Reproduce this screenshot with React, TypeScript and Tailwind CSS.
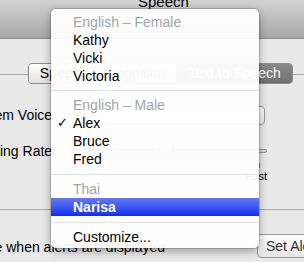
import React from 'react';

type Row =
  | { kind: 'header'; label: string }
  | { kind: 'item'; label: string; checked?: boolean; active?: boolean }
  | { kind: 'sep'; h: string };

const rows: Row[] = [
  { kind: 'header', label: 'English – Female' },
  { kind: 'item', label: 'Kathy' },
  { kind: 'item', label: 'Vicki' },
  { kind: 'item', label: 'Victoria' },
  { kind: 'sep', h: 'h-[11px]' },
  { kind: 'header', label: 'English – Male' },
  { kind: 'item', label: 'Alex', checked: true },
  { kind: 'item', label: 'Bruce' },
  { kind: 'item', label: 'Fred' },
  { kind: 'sep', h: 'h-[12px]' },
  { kind: 'header', label: 'Thai' },
  { kind: 'item', label: 'Narisa', active: true },
  { kind: 'sep', h: 'h-[12px]' },
  { kind: 'item', label: 'Customize...' },
];

const VoiceMenu: React.FC = () => (
  <div className="absolute left-[51px] top-[9px] w-[208px] rounded-[5px] bg-white/95 pt-[4px] pb-[2px] shadow-[0_3px_10px_rgba(0,0,0,0.35)] ring-1 ring-black/15">
    {rows.map((r, i) => {
      if (r.kind === 'sep') {
        return (
          <div key={i} className={`${r.h} flex items-center`}>
            <div className="h-px w-full bg-[#e2e2e2]" />
          </div>
        );
      }
      if (r.kind === 'header') {
        return (
          <div key={i} className="flex h-[18px] items-center pl-[22px] text-[14px] text-[#a4a4a4]">
            {r.label}
          </div>
        );
      }
      return (
        <div
          key={i}
          className={`flex h-[18px] items-center text-[14px] ${
            r.active
              ? 'bg-gradient-to-b from-[#6477f8] to-[#1a27ee] font-bold text-[13px] text-white'
              : 'text-black'
          }`}
        >
          <span className="w-[22px] pl-[6px] font-['DejaVu_Sans',sans-serif] text-[13px]">
            {r.checked ? '✓' : ''}
          </span>
          {r.label}
        </div>
      );
    })}
  </div>
);

export default function App() {
  return (
    <div className="relative h-[262px] w-[304px] overflow-hidden bg-[#e9e9e9] font-['Liberation_Sans',Arial,sans-serif] text-black">
      {/* Toolbar */}
      <div className="h-[45px] border-b border-[#8a8a8a] bg-gradient-to-b from-[#d9d9d9] to-[#a8a8a8] pl-[138px]">
        <div className="-mt-[6px] text-[15px] leading-[16px]">Speech</div>
      </div>

      {/* Tab box */}
      <div className="mt-[35px] h-[136px] border-y border-[#a9a9a9]">
        <div className="-mt-[12px] ml-[28px] flex h-[21px] w-[265px] overflow-hidden rounded-[4px] border border-[#8c8c8c] text-[14px]">
          <div className="flex w-[147px] items-center justify-center bg-gradient-to-b from-white to-[#e3e3e3]">
            Speech Recognition
          </div>
          <div className="flex flex-1 items-center justify-center bg-gradient-to-b from-[#8a8a8a] to-[#6f6f6f] pl-[1px] text-white">
            Text to Speech
          </div>
        </div>

        <div className="mt-[22px] flex h-[19px] items-center">
          <div className="flex w-[56px] justify-end whitespace-nowrap text-[14px]">System Voice:</div>
          <div className="ml-[5px] h-[19px] w-[204px] rounded-[4px] border border-[#9a9a9a] bg-gradient-to-b from-white to-[#ececec]" />
        </div>

        <div className="mt-[17px] flex h-[18px] items-center">
          <div className="flex w-[56px] justify-end whitespace-nowrap text-[14px]">Speaking Rate:</div>
          <div className="relative ml-[12px] flex h-[18px] w-[199px] items-center">
            <div className="h-[4px] w-full rounded-full border border-[#9a9a9a] bg-[#d6d6d6]" />
            <div className="absolute left-[91px] top-[-5px] h-[16px] w-[15px] rounded-full border border-[#8a8a8a] bg-gradient-to-b from-white to-[#dcdcdc]" />
          </div>
        </div>
        <div className="ml-[259px] mt-[3px] h-[5px] w-px bg-[#7a7a7a]" />
        <div className="mt-[1px] flex w-[267px] justify-end text-[11px] leading-[14px]">Fast</div>
      </div>

      {/* Bottom row */}
      <div className="mt-[24px] flex items-start">
        <div className="flex w-[165px] justify-end whitespace-nowrap pt-[4px] text-[14px] leading-[18px]">
          Announce when alerts are displayed
        </div>
        <div className="ml-[92px] flex h-[24px] w-[120px] shrink-0 items-center whitespace-nowrap rounded-[4px] border border-[#9a9a9a] bg-gradient-to-b from-white to-[#e6e6e6] pl-[8px] text-[14px] text-[#333]">
          Set Alert Voice...
        </div>
      </div>

      <VoiceMenu />
    </div>
  );
}
